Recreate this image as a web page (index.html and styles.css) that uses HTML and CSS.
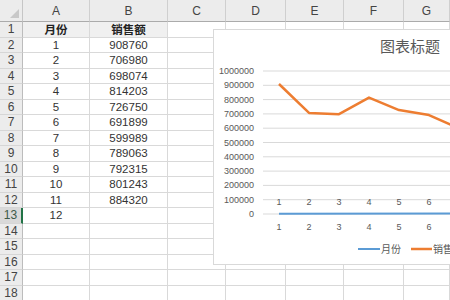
FILE: index.html
```html
<!DOCTYPE html>
<html>
<head>
<meta charset="utf-8">
<link rel="stylesheet" href="styles.css">
</head>
<body>
<div class="sheet">
  <div class="corner"><span class="tri"></span></div><div class="ch">A</div><div class="ch">B</div><div class="ch">C</div><div class="ch">D</div><div class="ch">E</div><div class="ch">F</div><div class="ch">G</div>
  <div class="rh">1</div><div class="c t">月份</div><div class="c t">销售额</div><div class="c"></div><div class="c"></div><div class="c"></div><div class="c"></div><div class="c"></div>
  <div class="rh">2</div><div class="c">1</div><div class="c">908760</div><div class="c"></div><div class="c"></div><div class="c"></div><div class="c"></div><div class="c"></div>
  <div class="rh">3</div><div class="c">2</div><div class="c">706980</div><div class="c"></div><div class="c"></div><div class="c"></div><div class="c"></div><div class="c"></div>
  <div class="rh">4</div><div class="c">3</div><div class="c">698074</div><div class="c"></div><div class="c"></div><div class="c"></div><div class="c"></div><div class="c"></div>
  <div class="rh">5</div><div class="c">4</div><div class="c">814203</div><div class="c"></div><div class="c"></div><div class="c"></div><div class="c"></div><div class="c"></div>
  <div class="rh">6</div><div class="c">5</div><div class="c">726750</div><div class="c"></div><div class="c"></div><div class="c"></div><div class="c"></div><div class="c"></div>
  <div class="rh">7</div><div class="c">6</div><div class="c">691899</div><div class="c"></div><div class="c"></div><div class="c"></div><div class="c"></div><div class="c"></div>
  <div class="rh">8</div><div class="c">7</div><div class="c">599989</div><div class="c"></div><div class="c"></div><div class="c"></div><div class="c"></div><div class="c"></div>
  <div class="rh">9</div><div class="c">8</div><div class="c">789063</div><div class="c"></div><div class="c"></div><div class="c"></div><div class="c"></div><div class="c"></div>
  <div class="rh">10</div><div class="c">9</div><div class="c">792315</div><div class="c"></div><div class="c"></div><div class="c"></div><div class="c"></div><div class="c"></div>
  <div class="rh">11</div><div class="c">10</div><div class="c">801243</div><div class="c"></div><div class="c"></div><div class="c"></div><div class="c"></div><div class="c"></div>
  <div class="rh">12</div><div class="c">11</div><div class="c">884320</div><div class="c"></div><div class="c"></div><div class="c"></div><div class="c"></div><div class="c"></div>
  <div class="rh sel">13</div><div class="c">12</div><div class="c"></div><div class="c"></div><div class="c"></div><div class="c"></div><div class="c"></div><div class="c"></div>
  <div class="rh">14</div><div class="c"></div><div class="c"></div><div class="c"></div><div class="c"></div><div class="c"></div><div class="c"></div><div class="c"></div>
  <div class="rh">15</div><div class="c"></div><div class="c"></div><div class="c"></div><div class="c"></div><div class="c"></div><div class="c"></div><div class="c"></div>
  <div class="rh">16</div><div class="c"></div><div class="c"></div><div class="c"></div><div class="c"></div><div class="c"></div><div class="c"></div><div class="c"></div>
  <div class="rh">17</div><div class="c"></div><div class="c"></div><div class="c"></div><div class="c"></div><div class="c"></div><div class="c"></div><div class="c"></div>
  <div class="rh">18</div><div class="c"></div><div class="c"></div><div class="c"></div><div class="c"></div><div class="c"></div><div class="c"></div><div class="c"></div>
</div>

<div class="chart">
  <svg width="394" height="236" viewBox="0 0 394 236">
    <text class="title" x="197" y="23" text-anchor="middle">图表标题</text>
    <g class="grid">
      <line x1="50" y1="42" x2="394" y2="42"/>
      <line x1="50" y1="56.3" x2="394" y2="56.3"/>
      <line x1="50" y1="70.6" x2="394" y2="70.6"/>
      <line x1="50" y1="84.9" x2="394" y2="84.9"/>
      <line x1="50" y1="99.2" x2="394" y2="99.2"/>
      <line x1="50" y1="113.5" x2="394" y2="113.5"/>
      <line x1="50" y1="127.8" x2="394" y2="127.8"/>
      <line x1="50" y1="142.1" x2="394" y2="142.1"/>
      <line x1="50" y1="156.4" x2="394" y2="156.4"/>
      <line x1="50" y1="170.7" x2="394" y2="170.7"/>
      <line x1="50" y1="185" x2="394" y2="185"/>
    </g>
    <g class="lbl" text-anchor="end">
      <text x="41" y="45">1000000</text>
      <text x="41" y="59.3">900000</text>
      <text x="41" y="73.6">800000</text>
      <text x="41" y="87.9">700000</text>
      <text x="41" y="102.2">600000</text>
      <text x="41" y="116.5">500000</text>
      <text x="41" y="130.8">400000</text>
      <text x="41" y="145.1">300000</text>
      <text x="41" y="159.4">200000</text>
      <text x="41" y="173.7">100000</text>
      <text x="41" y="188">0</text>
    </g>
    <g class="lbl" text-anchor="middle">
      <text x="66" y="176">1</text><text x="96" y="176">2</text><text x="126" y="176">3</text><text x="156" y="176">4</text><text x="186" y="176">5</text><text x="216" y="176">6</text>
      <text x="66" y="201">1</text><text x="96" y="201">2</text><text x="126" y="201">3</text><text x="156" y="201">4</text><text x="186" y="201">5</text><text x="216" y="201">6</text>
    </g>
    <polyline class="s1" points="66,184.7 394,184.3"/>
    <polyline class="s2" points="66,55 96,83.9 126,85.2 156,68.6 186,81.1 216,86.1 246,99.2 276,72.2 306,71.7 336,70.4 366,58.5"/>
    <line class="s1" x1="145" y1="220" x2="167" y2="220"/>
    <text class="leg" x="168" y="224">月份</text>
    <line class="s2" x1="198" y1="220" x2="219" y2="220"/>
    <text class="leg" x="220" y="224">销售额</text>
  </svg>
</div>
</body>
</html>
```

FILE: styles.css
```css
html, body {
  margin: 0;
  padding: 0;
  background: #ffffff;
  overflow: hidden;
}
body {
  width: 450px;
  height: 300px;
  position: relative;
  font-family: "Liberation Sans", "Noto Sans CJK SC", sans-serif;
}
.sheet {
  display: grid;
  grid-template-columns: 23px 67px 78px 58px 60px 58px 60px 46px;
  grid-template-rows: 22px repeat(18, 15.5px);
  width: 450px;
}
.sheet > div {
  box-sizing: border-box;
  display: flex;
  align-items: center;
  justify-content: center;
  overflow: hidden;
  white-space: nowrap;
}
.corner {
  background: #ececec;
  border-right: 1px solid #c6c6c6;
  border-bottom: 1px solid #ababab;
  position: relative;
}
.tri {
  position: absolute;
  right: 3px;
  bottom: 3px;
  width: 0;
  height: 0;
  border-left: 9px solid transparent;
  border-bottom: 9px solid #c8c8c8;
}
.ch {
  background: #ececec;
  border-right: 1px solid #cfcfcf;
  border-bottom: 1px solid #ababab;
  color: #444;
  font-size: 12px;
}
.rh {
  background: #ececec;
  border-right: 1px solid #bcbcbc;
  border-bottom: 1px solid #d6d6d6;
  color: #444;
  font-size: 12px;
}
.rh.sel {
  background: #d9d9d9;
  border-right: 2px solid #217346;
  color: #3d5a48;
}
.c {
  border-right: 1px solid #d9d9d9;
  border-bottom: 1px solid #d9d9d9;
  color: #333;
  font-size: 11.5px;
}
.c.t {
  background: #f0f0f0;
  font-weight: bold;
  color: #222;
}
.chart {
  position: absolute;
  left: 213px;
  top: 29px;
  width: 394px;
  height: 236px;
  background: #ffffff;
  border: 1px solid #d9d9d9;
  box-sizing: border-box;
}
.chart svg {
  display: block;
  position: absolute;
  left: -1px;
  top: -1px;
}
.title {
  font-size: 15px;
  fill: #595959;
  font-family: "Noto Sans CJK SC", sans-serif;
}
.grid line {
  stroke: #d9d9d9;
  stroke-width: 1;
}
.lbl {
  font-size: 9px;
  fill: #595959;
  font-family: "Liberation Sans", sans-serif;
}
.leg {
  font-size: 10px;
  fill: #595959;
  font-family: "Noto Sans CJK SC", sans-serif;
}
.s1 {
  fill: none;
  stroke: #5b9bd5;
  stroke-width: 2;
}
.s2 {
  fill: none;
  stroke: #ed7d31;
  stroke-width: 2.5;
  stroke-linejoin: round;
}
```
